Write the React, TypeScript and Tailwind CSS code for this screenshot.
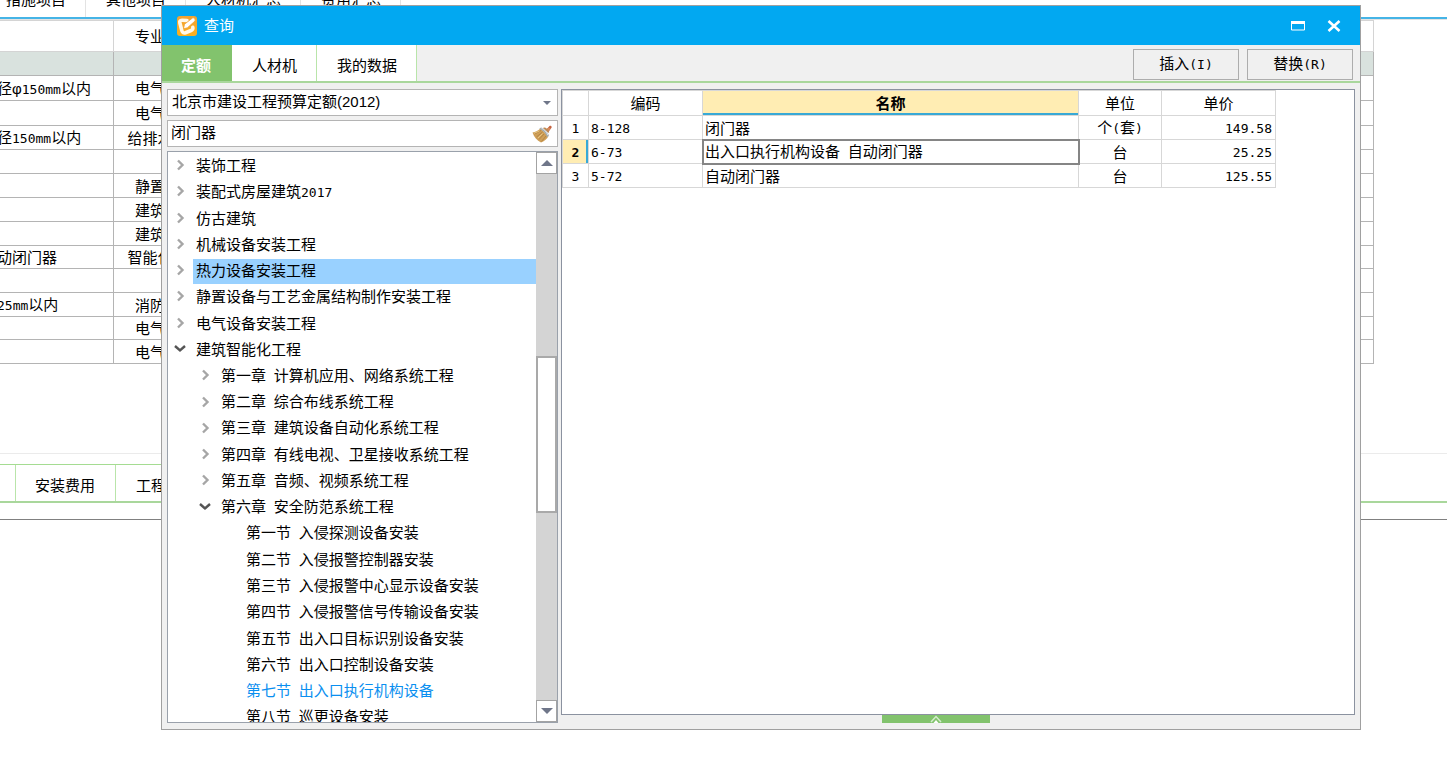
import { Fragment, useState } from 'react'
import clsx from 'clsx'

const workTabs = ['措施项目', '其他项目', '人材机汇总', '费用汇总']

const workRows = [
  { name: '', major: '', height: 'h-6', shaded: true },
  { name: '径φ150mm以内', major: '电气', height: 'h-[25px]' },
  { name: '', major: '电气', height: 'h-[25px]' },
  { name: '径150mm以内', major: '给排水', height: 'h-6' },
  { name: '', major: '', height: 'h-6' },
  { name: '', major: '静置', height: 'h-6' },
  { name: '', major: '建筑', height: 'h-6' },
  { name: '', major: '建筑', height: 'h-6' },
  { name: '动闭门器', major: '智能化', height: 'h-[23px]' },
  { name: '', major: '', height: 'h-6' },
  { name: '25mm以内', major: '消防', height: 'h-6' },
  { name: '', major: '电气', height: 'h-[23px]' },
  { name: '', major: '电气', height: 'h-6' },
]

type TreeNode = {
  label: string
  level: 0 | 1 | 2
  state: 'open' | 'closed' | 'leaf'
}

const treeNodes: TreeNode[] = [
  { label: '装饰工程', level: 0, state: 'closed' },
  { label: '装配式房屋建筑2017', level: 0, state: 'closed' },
  { label: '仿古建筑', level: 0, state: 'closed' },
  { label: '机械设备安装工程', level: 0, state: 'closed' },
  { label: '热力设备安装工程', level: 0, state: 'closed' },
  { label: '静置设备与工艺金属结构制作安装工程', level: 0, state: 'closed' },
  { label: '电气设备安装工程', level: 0, state: 'closed' },
  { label: '建筑智能化工程', level: 0, state: 'open' },
  { label: '第一章 计算机应用、网络系统工程', level: 1, state: 'closed' },
  { label: '第二章 综合布线系统工程', level: 1, state: 'closed' },
  { label: '第三章 建筑设备自动化系统工程', level: 1, state: 'closed' },
  { label: '第四章 有线电视、卫星接收系统工程', level: 1, state: 'closed' },
  { label: '第五章 音频、视频系统工程', level: 1, state: 'closed' },
  { label: '第六章 安全防范系统工程', level: 1, state: 'open' },
  { label: '第一节 入侵探测设备安装', level: 2, state: 'leaf' },
  { label: '第二节 入侵报警控制器安装', level: 2, state: 'leaf' },
  { label: '第三节 入侵报警中心显示设备安装', level: 2, state: 'leaf' },
  { label: '第四节 入侵报警信号传输设备安装', level: 2, state: 'leaf' },
  { label: '第五节 出入口目标识别设备安装', level: 2, state: 'leaf' },
  { label: '第六节 出入口控制设备安装', level: 2, state: 'leaf' },
  { label: '第七节 出入口执行机构设备', level: 2, state: 'leaf' },
  { label: '第八节 巡更设备安装', level: 2, state: 'leaf' },
]

const quotas = [
  { code: '8-128', name: '闭门器', unit: '个(套)', price: '149.58' },
  { code: '6-73', name: '出入口执行机构设备 自动闭门器', unit: '台', price: '25.25' },
  { code: '5-72', name: '自动闭门器', unit: '台', price: '125.55' },
]

const dialogTabs = ['定额', '人材机', '我的数据']

// Half-width characters are set in a mono face, Chinese stays in the page font
function Mixed({ text }: { text: string }) {
  return (
    <>
      {text.split(/([\x20-\x7e]+)/).map((part, i) =>
        i % 2 ? (
          <span
            key={i}
            className="font-['DejaVu_Sans_Mono',monospace] text-[13px] whitespace-pre"
          >
            {part}
          </span>
        ) : (
          <Fragment key={i}>{part}</Fragment>
        ),
      )}
    </>
  )
}

function LogoIcon(props: React.ComponentPropsWithoutRef<'svg'>) {
  return (
    <svg viewBox="0 0 20 20" aria-hidden="true" {...props}>
      <defs>
        <linearGradient id="logo" x1="0" y1="0" x2="0" y2="1">
          <stop offset="0" stopColor="#f2a232" />
          <stop offset="1" stopColor="#fbb01c" />
        </linearGradient>
      </defs>
      <rect width="20" height="20" rx="3" fill="url(#logo)" />
      <path
        d="M10 4.500 5 4.200C3 4.200 2.500 5.300 2.900 7l2 7.800c.6 2 1.800 2.600 3.600 1.900l5.500-2.200c1.600-.7 2.100-1.700 1.800-3.200"
        fill="none"
        stroke="#fff8e8"
        strokeWidth="3.600"
        strokeLinecap="round"
        strokeLinejoin="round"
      />
      <path
        d="m6.500 12.800 1-4.600L15.500 2c1.200-.8 3.600 1.900 2.500 3l-7.600 6.800Z"
        fill="#fff"
        stroke="#f2a232"
        strokeWidth=".8"
      />
    </svg>
  )
}

function BroomIcon(props: React.ComponentPropsWithoutRef<'svg'>) {
  return (
    <svg viewBox="0 0 20 18" aria-hidden="true" {...props}>
      <path d="m14 5 3.500-4c1-1 2.800.5 2 1.700L16 7.500Z" fill="#c4623f" />
      <path d="m14.500 4.500 2-2.300 2 1.500-2 2.800Z" fill="#d98a5c" />
      <path
        d="M8.500 3.500C6 5.800 3 7 .5 7.500c1.500 4.500 4.500 8 8.500 10 3-1 6-3.500 7.500-6.500Z"
        fill="#cf9f57"
      />
      <path
        d="M9 5.500 2.500 9M10.500 7 4.500 12M12 9l-5 5.500M14 11l-4.500 5.500"
        stroke="#a87a3c"
        strokeWidth=".7"
      />
      <path d="M7.500 6 2 8.300M10.500 8.500l-4.500 4.500" stroke="#efcf8c" strokeWidth=".8" />
      <path d="M9 2.500c3.500 1 6.500 4 8 8l-1.800 1.800c-1.500-4-4.200-7-8-8.500Z" fill="#a4acb0" />
      <path d="M9.500 3.200c3 1.300 5.200 3.600 6.500 7" fill="none" stroke="#e4e8ea" />
      <path d="M11 3c1-1 2.500-.5 4 .8s2.500 2.700 2 4.200Z" fill="#bf8a52" />
    </svg>
  )
}

function ChevronIcon({ open }: { open: boolean }) {
  return (
    <svg
      viewBox="0 0 14 14"
      aria-hidden="true"
      fill="none"
      strokeWidth="2.400"
      className={clsx('size-3.5 shrink-0', open ? 'stroke-[#555]' : 'stroke-[#a6a6a6]')}
    >
      <path d={open ? 'm2 3 5 4.500L12 3' : 'm5 1.500 4.500 4.500L5 10.500'} />
    </svg>
  )
}

function Triangle({ up, className }: { up?: boolean; className?: string }) {
  return (
    <svg viewBox="0 0 12 6" aria-hidden="true" className={clsx('fill-[#6f7689]', className)}>
      <path d={up ? 'M0 6 6 0l6 6Z' : 'M0 0h12L6 6Z'} />
    </svg>
  )
}

function Workspace() {
  return (
    <main className="min-h-screen">
      <nav className="-ml-3.5 flex h-[17px]">
        {workTabs.map((tab) => (
          <a
            key={tab}
            href="#"
            className="-mt-3 block border-r border-[#e3e3e3] pr-[19px] pl-5 leading-6 whitespace-nowrap"
          >
            {tab}
          </a>
        ))}
      </nav>
      <div className="h-[3px] border-b border-[#e3e3e3] bg-[#45b4e6]" />
      <div className="-ml-1 pr-[73px]">
        <table className="w-full table-fixed border-collapse">
          <colgroup>
            <col className="w-[117px]" />
            <col className="w-[73px]" />
            <col />
          </colgroup>
          <thead>
            <tr className="h-[31px]">
              <th className="border border-[#d4d4d4]" />
              <th className="border border-[#d4d4d4] p-0 pt-0.5 font-normal">专业</th>
              <th className="border border-[#d4d4d4]" />
            </tr>
          </thead>
          <tbody>
            {workRows.map((row, i) => (
              <tr key={i} className={clsx(row.height, row.shaded && 'bg-[#d9e2de]')}>
                <td className="border border-[#b4b4b4] p-0 pt-0.5 leading-[18px] whitespace-nowrap">
                  <Mixed text={row.name} />
                </td>
                <td className="border border-[#b4b4b4] p-0 pt-0.5 text-center leading-[18px] whitespace-nowrap">
                  {row.major}
                </td>
                <td className="border border-[#b4b4b4] p-0" />
              </tr>
            ))}
          </tbody>
        </table>
      </div>
      <div className="mt-[89px] h-[11px] border-t border-[#ebebeb]" />
      <nav className="flex border-b-2 border-[#a9d79c]">
        <div className="flex h-[37px] border-t border-[#a5dc92]">
          <span className="w-4 border-r border-[#b9e5aa]" />
          <a href="#" className="border-r border-[#b9e5aa] pr-5 pl-[19px] leading-[41px]">
            安装费用
          </a>
          <a href="#" className="px-5 leading-[41px]">
            工程量
          </a>
        </div>
      </nav>
      <div className="mt-4 border-t border-[#808080]" />
    </main>
  )
}

function TitleBar() {
  return (
    <header className="flex h-[39px] items-center bg-[#02a8f1] pr-[15px] pl-[15px] text-white">
      <LogoIcon className="size-5" />
      <h1 className="ml-[7px] pt-0.5">查询</h1>
      <button type="button" aria-label="最大化" className="ml-auto p-1">
        <svg viewBox="0 0 14 10" className="h-2.5 w-3.5">
          <path d="M.5 1h13v8H.5Z" fill="none" stroke="#fff" />
          <path d="M0 0h14v3H0Z" fill="#fff" />
        </svg>
      </button>
      <button type="button" aria-label="关闭" className="ml-3.5 p-1">
        <svg viewBox="0 0 14 12" className="h-3 w-3.5">
          <path d="m1.500 1 11 10m0-10-11 10" stroke="#fff" strokeWidth="2.600" />
        </svg>
      </button>
    </header>
  )
}

function Toolbar() {
  const [active, setActive] = useState('定额')

  return (
    <div className="flex h-[38px] border-b-2 border-[#a9d79c]">
      {dialogTabs.map((tab) => (
        <button
          key={tab}
          type="button"
          onClick={() => setActive(tab)}
          className={clsx(
            'border-r pt-1.5',
            tab === active
              ? 'border-[#82c36d] bg-[#82c36d] pr-5 pl-[19px] font-bold text-white'
              : 'border-[#b9e5aa] bg-white pr-[19px] pl-5',
          )}
        >
          {tab}
        </button>
      ))}
      <div className="ml-auto flex gap-2 pt-1 pr-[7px] pb-px">
        <button type="button" className="w-[106px] border border-[#adadad]">
          <Mixed text="插入(I)" />
        </button>
        <button type="button" className="w-[106px] border border-[#adadad]">
          <Mixed text="替换(R)" />
        </button>
      </div>
    </div>
  )
}

function ScrollBar() {
  return (
    <div className="flex w-[21px] shrink-0 flex-col bg-[#d4d4d4]">
      <button
        type="button"
        aria-label="向上"
        className="flex h-[22px] items-center justify-center border border-[#a3a3a3] bg-white"
      >
        <Triangle up className="h-1.5 w-3" />
      </button>
      <div className="grow-[184]" />
      <div className="grow-[155] border-2 border-[#a9a9a9] bg-white" />
      <div className="grow-[190]" />
      <button
        type="button"
        aria-label="向下"
        className="flex h-[22px] items-center justify-center border border-[#a3a3a3] bg-white"
      >
        <Triangle className="h-1.5 w-3" />
      </button>
    </div>
  )
}

function QuotaTree() {
  const [selected, setSelected] = useState('热力设备安装工程')

  return (
    <div className="flex h-[572px] overflow-hidden border border-[#9aa1ab] bg-white">
      <ul className="grid h-[579px] flex-1 auto-rows-fr pt-px">
        {treeNodes.map((node) => (
          <li
            key={node.label}
            className={clsx(
              'flex items-center',
              node.level === 0 && 'pl-[5px]',
              node.level === 1 && 'pl-[30px]',
              node.level === 2 && 'pl-[55px]',
            )}
          >
            {node.state === 'leaf' ? (
              <span className="w-3.5" />
            ) : (
              <ChevronIcon open={node.state === 'open'} />
            )}
            <button
              type="button"
              onClick={() => setSelected(node.label)}
              className={clsx(
                'ml-1.5 h-[25px] flex-1 pl-[3px] text-left leading-5 whitespace-nowrap',
                node.label === selected && 'bg-[#99d1ff]',
                node.label.startsWith('第七节') && 'text-[#0a8ff0]',
              )}
            >
              <Mixed text={node.label} />
            </button>
          </li>
        ))}
      </ul>
      <ScrollBar />
    </div>
  )
}

function Sidebar() {
  return (
    <div className="flex w-[391px] shrink-0 flex-col">
      <div className="grid items-center">
        <select
          aria-label="定额库"
          className="col-start-1 row-start-1 h-[27px] appearance-none border border-[#b4b4b4] bg-white px-1"
        >
          <option>北京市建设工程预算定额(2012)</option>
        </select>
        <Triangle className="col-start-1 row-start-1 mr-[7px] h-1 w-2 justify-self-end" />
      </div>
      <div className="mt-1 flex h-[27px] items-center border border-[#b4b4b4] bg-white pr-[5px] pl-[3px]">
        <input
          aria-label="搜索"
          defaultValue="闭门器"
          className="min-w-0 flex-1 outline-none"
        />
        <button type="button" aria-label="清除">
          <BroomIcon className="h-[18px] w-5" />
        </button>
      </div>
      <div className="mt-1">
        <QuotaTree />
      </div>
    </div>
  )
}

function QuotaTable() {
  const current = 1

  return (
    <div className="flex-1 border border-[#8b92a0] bg-white">
      <table className="table-fixed border-collapse">
        <colgroup>
          <col className="w-[26px]" />
          <col className="w-[114px]" />
          <col className="w-[376px]" />
          <col className="w-[83px]" />
          <col className="w-[114px]" />
        </colgroup>
        <thead>
          <tr className="h-[25px] *:border *:border-[#d7d7d7] *:p-0 *:pt-0.5 *:leading-[18px]">
            <th />
            <th className="font-normal">编码</th>
            <th className="bg-[#ffedb3] font-bold shadow-[inset_0_-2px_#38a9d6]">名称</th>
            <th className="font-normal">单位</th>
            <th className="font-normal">单价</th>
          </tr>
        </thead>
        <tbody>
          {quotas.map((quota, i) => (
            <tr
              key={quota.code}
              className="h-6 whitespace-nowrap *:border *:border-[#d7d7d7] *:p-0 *:pt-0.5 *:leading-[18px]"
            >
              <th
                className={
                  i === current
                    ? 'bg-[#ffedb3] font-bold shadow-[inset_-2px_0_#38a9d6]'
                    : 'font-normal'
                }
              >
                <Mixed text={String(i + 1)} />
              </th>
              <td>
                <div className="pl-0.5">
                  <Mixed text={quota.code} />
                </div>
              </td>
              <td className={clsx(i === current && 'outline-2 -outline-offset-1 outline-[#858585]')}>
                <div className="pl-0.5">
                  <Mixed text={quota.name} />
                </div>
              </td>
              <td className="text-center">
                <Mixed text={quota.unit} />
              </td>
              <td className="text-right">
                <div className="pr-[3px]">
                  <Mixed text={quota.price} />
                </div>
              </td>
            </tr>
          ))}
        </tbody>
      </table>
    </div>
  )
}

function QueryDialog() {
  return (
    <section
      role="dialog"
      aria-label="查询"
      className="absolute top-[5px] right-[86px] left-[161px] border border-[#a0a0a0] bg-[#f0f0f0]"
    >
      <TitleBar />
      <Toolbar />
      <div className="flex gap-[3px] px-[5px] pt-1.5 pb-1.5">
        <Sidebar />
        <div className="flex min-w-0 flex-1 flex-col">
          <QuotaTable />
          <button
            type="button"
            aria-label="展开"
            className="ml-[321px] flex h-2 w-[108px] justify-center bg-[#82c36d]"
          >
            <svg viewBox="0 0 12 8" className="h-2 w-3">
              <path d="m1 7 5-5.500L11 7" fill="none" stroke="#d5edcd" strokeWidth="1.500" />
              <path d="m3.500 8 2.500-3L8.500 8Z" fill="#fff" />
            </svg>
          </button>
        </div>
      </div>
    </section>
  )
}

export default function App() {
  return (
    <div className="relative overflow-hidden bg-white font-['Liberation_Sans','Noto_Sans_CJK_SC',sans-serif] text-[15px] text-black">
      <Workspace />
      <QueryDialog />
    </div>
  )
}
